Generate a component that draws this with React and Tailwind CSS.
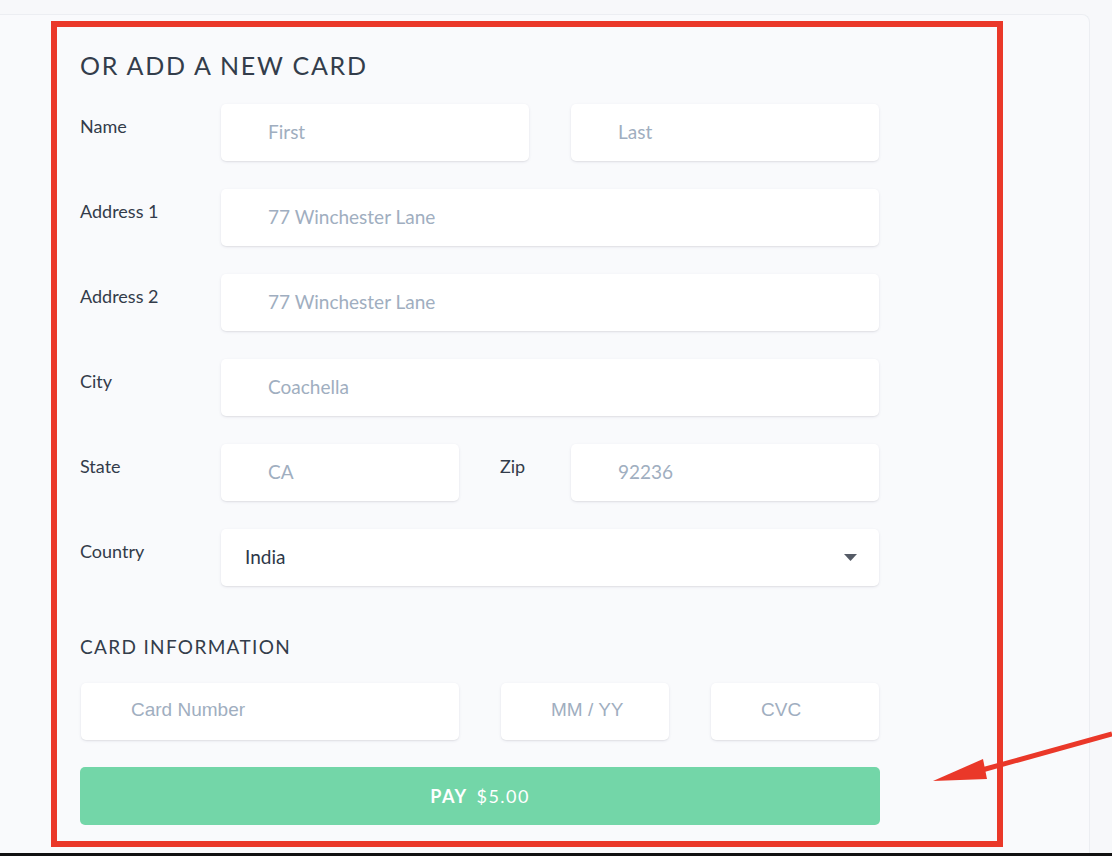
import React from "react";

const labelCls = "w-[141px] shrink-0 pt-[10px] text-[18px] leading-[24px] text-[#333c4a]";
const inputCls =
  "h-[57px] bg-white rounded-[5px] shadow-[0_1px_3px_rgba(50,50,93,0.10),0_1px_1px_rgba(0,0,0,0.04)] pl-[47px] pb-[3px] text-[19px] text-[#2d3748] placeholder:text-[#a0aec0] outline-none";
const stripeCls =
  "h-[57px] bg-white rounded-[5px] shadow-[0_1px_3px_rgba(50,50,93,0.10),0_1px_1px_rgba(0,0,0,0.04)] pl-[50px] pb-[3px] text-[19px] text-[#2d3748] placeholder:text-[#a0aec0] outline-none";

const Row = ({ label, children }) => (
  <div className="flex mb-[28px]">
    <div className={labelCls}>{label}</div>
    {children}
  </div>
);

const App = () => {
  return (
    <div
      className="relative w-[1112px] h-[856px] overflow-hidden bg-[#f7f8fa]"
      style={{ fontFamily: "Lato, 'Open Sans', sans-serif" }}
    >
      <div className="mt-[14px] w-[1090px] h-[839px] bg-[#f9fafc] border-t border-r border-[#eceef2] rounded-tr-[8px] pl-[80px] pt-[34px]">
        <h2 className="text-[25px] leading-[32px] tracking-[0.07em] text-[#333d4b] font-normal">
          OR ADD A NEW CARD
        </h2>

        <div className="mt-[23px] w-[799px]">
          <Row label="Name">
            <input className={`${inputCls} w-[308px]`} placeholder="First" />
            <input className={`${inputCls} w-[308px] ml-[42px]`} placeholder="Last" />
          </Row>
          <Row label="Address 1">
            <input className={`${inputCls} w-[658px]`} placeholder="77 Winchester Lane" />
          </Row>
          <Row label="Address 2">
            <input className={`${inputCls} w-[658px]`} placeholder="77 Winchester Lane" />
          </Row>
          <Row label="City">
            <input className={`${inputCls} w-[658px]`} placeholder="Coachella" />
          </Row>
          <Row label="State">
            <input className={`${inputCls} w-[238px]`} placeholder="CA" />
            <div className="w-[71px] ml-[41px] pt-[10px] text-[18px] leading-[24px] text-[#333c4a]">Zip</div>
            <input className={`${inputCls} w-[308px]`} placeholder="92236" />
          </Row>
          <Row label="Country">
            <div className="w-[658px] h-[57px] bg-white rounded-[5px] shadow-[0_1px_3px_rgba(50,50,93,0.10),0_1px_1px_rgba(0,0,0,0.04)] flex items-center justify-between pl-[24px] pr-[22px]">
              <span className="text-[19px] text-[#2d3748]">India</span>
              <svg width="13" height="7" viewBox="0 0 13 7">
                <path d="M0 0 L13 0 L6.5 7 Z" fill="#555b66" />
              </svg>
            </div>
          </Row>
        </div>

        <h3 className="mt-[48px] text-[19px] leading-[26px] tracking-[0.07em] text-[#333d4b] font-normal">
          CARD INFORMATION
        </h3>

        <div
          className="mt-[23px] flex w-[799px]"
          style={{ fontFamily: "'Liberation Sans', Arial, sans-serif" }}
        >
          <input className={`${stripeCls} w-[378px] ml-[1px]`} placeholder="Card Number" />
          <input className={`${stripeCls} w-[168px] ml-[42px]`} placeholder="MM / YY" />
          <input className={`${stripeCls} w-[168px] ml-[42px]`} placeholder="CVC" />
        </div>

        <button className="mt-[27px] w-[800px] h-[58px] rounded-[5px] bg-[#73d6a8] text-white text-[18px] tracking-[0.08em] flex items-center justify-center">
          <span className="font-bold">PAY</span>
          <span className="ml-[9px]">$5.00</span>
        </button>
      </div>

      {/* annotation */}
      <div className="absolute left-[51px] top-[21px] w-[952px] h-[826px] border-[6px] border-[#ea3829] pointer-events-none" />
      <svg className="absolute left-0 top-0 pointer-events-none" width="1112" height="856">
        <line x1="1112" y1="734" x2="982" y2="770" stroke="#ea3829" strokeWidth="5" />
        <polygon points="933,781 983,759 987,779" fill="#ea3829" />
      </svg>
      <div className="absolute left-0 bottom-0 w-full h-[3px] bg-[#111]" />
    </div>
  );
};

export default App;
